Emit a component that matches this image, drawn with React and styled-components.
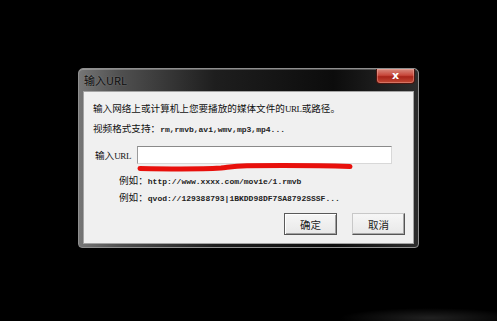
import React from "react";
import styled, { createGlobalStyle } from "styled-components";

const GlobalStyle = createGlobalStyle`
  * {
    box-sizing: border-box;
  }
  body {
    margin: 0;
    background: #000;
    font-family: "Noto Sans CJK SC", "Liberation Sans", sans-serif;
  }
`;

const App = () => {
  return (
    <>
      <GlobalStyle />
      <Page>
        <Window>
          <TitleBar>
            <Title>输入URL</Title>
            <CloseButton>x</CloseButton>
          </TitleBar>
          <Body>
            <Line>
              输入网络上或计算机上您要播放的媒体文件的<Small>URL</Small>或路径。
            </Line>
            <Line $gap={6}>
              视频格式支持：<Mono>rm,rmvb,avi,wmv,mp3,mp4...</Mono>
            </Line>
            <InputRow>
              <Label>
                输入<Small>URL</Small>
              </Label>
              <InputWrap>
                <UrlInput />
                <Scribble viewBox="0 0 216 10" width="216" height="10">
                  <path
                    d="M3 5.4 C 40 6.2, 70 5.8, 84 5 C 92 4.2, 96 3, 110 2.8 C 150 2.4, 190 2.8, 213 3.6"
                    stroke="#e8100c"
                    strokeWidth="5"
                    strokeLinecap="round"
                    fill="none"
                  />
                </Scribble>
              </InputWrap>
            </InputRow>
            <Example $gap={10}>
              例如：<Mono>http://www.xxxx.com/movie/1.rmvb</Mono>
            </Example>
            <Example $gap={5}>
              例如：<Mono>qvod://129388793|1BKDD98DF7SA8792SSSF...</Mono>
            </Example>
            <Buttons>
              <Button $primary>确定</Button>
              <Button>取消</Button>
            </Buttons>
          </Body>
        </Window>
      </Page>
    </>
  );
};

export default App;

const Page = styled.div`
  width: 497px;
  height: 321px;
  overflow: hidden;
  display: flex;
  justify-content: center;
  align-items: flex-start;
  padding-top: 68px;
  background:
    radial-gradient(ellipse 90px 10px at 430px 318px, rgba(255, 255, 255, 0.13), transparent 100%),
    #000;
`;

const Window = styled.div`
  width: 341px;
  height: 180px;
  display: flex;
  flex-direction: column;
  border: 1px solid #8f8f8f;
  border-radius: 5px 5px 4px 4px;
  padding: 0 4px 3px 4px;
  background: linear-gradient(
    to right,
    #767676 0%,
    #505050 12%,
    #1e1e1e 40%,
    #0c0c0c 75%,
    #2c2c2c 100%
  );
  box-shadow: inset 0 1px 0 rgba(255, 255, 255, 0.25);
`;

const TitleBar = styled.div`
  height: 22px;
  display: flex;
  justify-content: space-between;
  align-items: flex-start;
  margin-right: -1px;
`;

const Title = styled.div`
  margin-top: 4px;
  padding-left: 1px;
  font-size: 11px;
  line-height: 14px;
  color: #0e0e0e;
  text-shadow: 0 0 2px rgba(170, 170, 170, 0.5);
`;

const CloseButton = styled.div`
  width: 39px;
  height: 15px;
  display: flex;
  align-items: center;
  justify-content: center;
  border: 1px solid #4a1510;
  border-top: none;
  border-radius: 0 0 4px 4px;
  background: linear-gradient(to bottom, #d88a7e 0%, #c7473a 45%, #a82419 55%, #c24a36 100%);
  box-shadow: inset 0 0 0 1px rgba(255, 200, 190, 0.35);
  color: #fff;
  font-family: "DejaVu Sans", sans-serif;
  font-weight: bold;
  font-size: 11px;
  line-height: 1;
  padding-bottom: 1px;
`;

const Body = styled.div`
  flex: 1;
  display: flex;
  flex-direction: column;
  background: #f0f0f0;
  border: 1px solid #a4a4a4;
  padding: 9px 8px 0 9px;
`;

const Line = styled.div`
  margin-top: ${(p) => p.$gap || 0}px;
  height: 14px;
  font-size: 9.6px;
  line-height: 14px;
  color: #111;
  white-space: nowrap;
`;

const Small = styled.span`
  font-family: "Liberation Serif", serif;
  font-size: 9px;
  letter-spacing: -0.4px;
`;

const Mono = styled.span`
  font-family: "Liberation Mono", monospace;
  font-size: 8px;
  font-weight: bold;
  color: #222;
`;

const InputRow = styled.div`
  margin-top: 11px;
  display: flex;
  align-items: center;
  padding-left: 2px;
  height: 18px;
`;

const Label = styled.div`
  width: 42px;
  font-size: 9.6px;
  color: #111;
  white-space: nowrap;
`;

const InputWrap = styled.div`
  position: relative;
  width: 255px;
  height: 18px;
`;

const UrlInput = styled.div`
  width: 100%;
  height: 100%;
  background: #fff;
  border: 1px solid #d8d8d8;
  border-top: 1px solid #8a8a8a;
  border-left: 1px solid #9a9a9a;
`;

const Scribble = styled.svg`
  position: absolute;
  left: 0;
  top: 17px;
  display: block;
`;

const Example = styled.div`
  margin-top: ${(p) => p.$gap || 0}px;
  padding-left: 26px;
  height: 12px;
  font-size: 9.6px;
  line-height: 12px;
  color: #111;
  white-space: nowrap;
`;

const Buttons = styled.div`
  margin-top: 10px;
  display: flex;
  justify-content: flex-end;
  gap: 15px;
`;

const Button = styled.div`
  width: 53px;
  height: 22px;
  display: flex;
  align-items: center;
  justify-content: center;
  font-size: 10.5px;
  color: #222;
  background: linear-gradient(to bottom, #f6f6f6, #e8e8e8);
  border: 1px solid ${(p) => (p.$primary ? "#5a5a5a" : "#c8c8c8")};
  border-right-color: #555;
  border-bottom-color: #555;
  box-shadow: ${(p) =>
    p.$primary
      ? "inset 1px 1px 0 #fff, inset -1px -1px 0 #a0a0a0"
      : "inset -1px -1px 0 #a8a8a8"};
`;
